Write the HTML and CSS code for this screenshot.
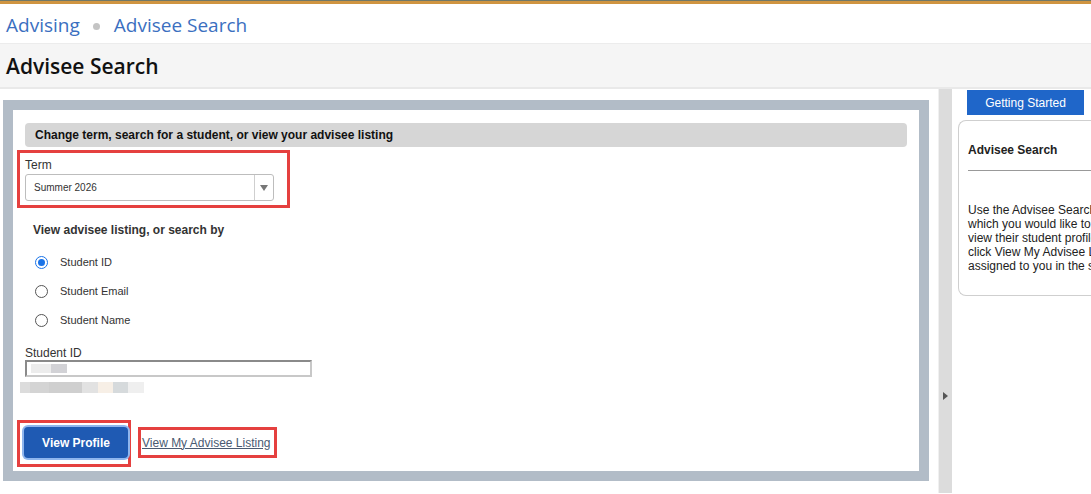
FILE: index.html
```html
<!DOCTYPE html>
<html>
<head>
<meta charset="utf-8">
<link rel="stylesheet" href="styles.css">
</head>
<body>
<div class="topline"></div>
<nav class="crumbs">
  <a class="crumb">Advising</a>
  <span class="dot"></span>
  <a class="crumb">Advisee Search</a>
</nav>
<header class="titlebar"><h1>Advisee Search</h1></header>
<div class="layout">
  <main class="maincol">
    <div class="frame">
      <div class="inner">
        <div class="sechead">Change term, search for a student, or view your advisee listing</div>
        <div class="redbox termbox">
          <div class="lbl">Term</div>
          <div class="select">
            <span class="selval">Summer 2026</span>
            <span class="selarrow"><svg width="8" height="6" viewBox="0 0 8 6"><path d="M0 0 H8 L4 6 Z" fill="#777"/></svg></span>
          </div>
        </div>
        <div class="subhead">View advisee listing, or search by</div>
        <div class="radios">
          <label class="radio"><span class="circle on"></span>Student ID</label>
          <label class="radio"><span class="circle"></span>Student Email</label>
          <label class="radio"><span class="circle"></span>Student Name</label>
        </div>
        <div class="lbl idlbl">Student ID</div>
        <div class="idinput"><span class="blur b1"></span><span class="blur b2"></span></div>
        <div class="blurrow">
          <span class="bb" style="width:10px;background:#dcdcdc"></span>
          <span class="bb" style="width:19px;background:#d4d4d4"></span>
          <span class="bb" style="width:33px;background:#cfcfcf"></span>
          <span class="bb" style="width:16px;background:#e2e2e2"></span>
          <span class="bb" style="width:15px;background:#f7efe6"></span>
          <span class="bb" style="width:15px;background:#d6dadc"></span>
          <span class="bb" style="width:16px;background:#efefef"></span>
        </div>
        <div class="actions">
          <div class="redbox btnbox"><button class="primary">View Profile</button></div>
          <div class="redbox linkbox"><a class="link">View My Advisee Listing</a></div>
        </div>
      </div>
    </div>
  </main>
  <div class="splitter"><svg width="5" height="8" viewBox="0 0 5 8"><path d="M0 0 L5 4 L0 8 Z" fill="#555"/></svg></div>
  <aside class="side">
    <div class="tab">Getting Started</div>
    <div class="card">
      <div class="cardtitle">Advisee Search</div>
      <hr class="cardrule">
      <p class="cardtext">Use the Advisee Search page to select a term<br>which you would like to work with. Search to<br>view their student profile, or alternatively<br>click View My Advisee Listing to see students<br>assigned to you in the selected term.</p>
    </div>
  </aside>
</div>
</body>
</html>
```
FILE: styles.css
```css
* { box-sizing: border-box; }
html, body { margin: 0; padding: 0; }
body {
  width: 1091px;
  height: 494px;
  overflow: hidden;
  background: #fff;
  font-family: "Liberation Sans", Arial, sans-serif;
  color: #222;
}
.topline {
  height: 4px;
  border-top: 1px solid #6f7868;
  background: #cf9440;
}
.crumbs {
  height: 40px;
  display: flex;
  align-items: center;
  padding: 3px 0 0 6px;
  font-family: "Open Sans", sans-serif;
  font-size: 19px;
  border-bottom: 1px solid #ececec;
}
.crumb { color: #3b6fc0; }
.dot {
  width: 7px; height: 7px;
  border-radius: 50%;
  background: #c4c4c4;
  margin: 2px 14px 0 13px;
}
.titlebar {
  height: 45px;
  background: #f5f5f5;
  border-bottom: 2px solid #e9e9e9;
  display: flex;
  align-items: center;
  padding-left: 6px;
}
.titlebar h1 {
  margin: 0;
  font-family: "Open Sans", sans-serif;
  font-weight: 600;
  font-size: 21px;
  color: #111;
}
.layout {
  display: flex;
  height: 404px;
}
.maincol {
  width: 939px;
  padding: 11px 0 0 3px;
  border-right: 1px solid #f0f0f0;
}
.frame {
  width: 926px;
  height: 381px;
  border: 10px solid #b2bcc7;
  background: #fff;
}
.inner {
  padding: 13px 0 0 4px;
  display: flex;
  flex-direction: column;
}
.sechead {
  margin-left: 8px;
  width: 882px;
  height: 24px;
  background: #d6d6d6;
  border-radius: 4px;
  font-weight: bold;
  font-size: 12px;
  line-height: 24px;
  padding-left: 10px;
  color: #111;
}
.redbox { border: 3px solid #e5403f; }
.termbox {
  margin-top: 3px;
  width: 273px;
  height: 58px;
  padding: 5px 0 0 5px;
}
.lbl { font-size: 12px; color: #333; line-height: 14px; }
.select {
  margin-top: 2px;
  width: 249px;
  height: 27px;
  border: 1px solid #bdbdbd;
  border-radius: 3px;
  display: flex;
  align-items: center;
}
.selval { flex: 1; font-size: 10px; color: #333; padding-left: 8px; }
.selarrow {
  width: 19px; height: 100%;
  border-left: 1px solid #cfcfcf;
  display: flex; align-items: center; justify-content: center;
}
.subhead {
  margin: 15px 0 0 16px;
  font-weight: bold;
  font-size: 12px;
  color: #333;
}
.radios {
  margin: 18px 0 0 18px;
  display: flex;
  flex-direction: column;
  gap: 15px;
}
.radio {
  display: flex;
  align-items: center;
  font-size: 11px;
  color: #333;
  height: 14px;
}
.circle {
  width: 13px; height: 13px;
  border: 1px solid #555;
  border-radius: 50%;
  margin-right: 12px;
  position: relative;
}
.circle.on { border-color: #1a73e8; }
.circle.on::after {
  content: "";
  position: absolute;
  left: 2px; top: 2px;
  width: 7px; height: 7px;
  border-radius: 50%;
  background: #1a73e8;
}
.idlbl { margin: 20px 0 0 8px; line-height: 12px; }
.idinput {
  margin: 1px 0 0 8px;
  width: 287px;
  height: 17px;
  border: 2px solid #8a8a8a;
  border-right-color: #c8c8c8;
  border-bottom-color: #c8c8c8;
  display: flex;
  align-items: center;
  padding-left: 4px;
}
.blur { display: inline-block; height: 9px; }
.b1 { width: 20px; background: #ececec; }
.b2 { width: 16px; background: #d2d2d6; }
.blurrow {
  margin: 5px 0 0 3px;
  display: flex;
  height: 11px;
}
.bb { display: inline-block; height: 11px; }
.actions {
  margin: 27px 0 0 0;
  display: flex;
  align-items: flex-start;
  gap: 7px;
}
.btnbox {
  width: 114px; height: 47px;
  padding: 4px 0 0 4px;
}
.primary {
  width: 104px; height: 31px;
  background: #1f5ab3;
  color: #fff;
  font-family: "Liberation Sans", Arial, sans-serif;
  font-weight: bold;
  font-size: 12px;
  border: none;
  border-radius: 4px;
  box-shadow: 0 0 0 2px #8fb6ee;
}
.linkbox {
  margin-top: 7px;
  width: 139px; height: 31px;
  padding-left: 1px;
  display: flex; align-items: center;
}
.link {
  font-size: 12px;
  color: #4a5a72;
  text-decoration: underline;
}
.splitter {
  width: 13px;
  background: #dcdcdc;
  display: flex;
  align-items: flex-start;
  justify-content: center;
  padding-top: 303px;
}
.side {
  flex: 1;
  overflow: hidden;
  display: flex;
  flex-direction: column;
}
.tab {
  margin: 1px 0 0 15px;
  width: 117px;
  height: 25px;
  background: #1f66c9;
  color: #fff;
  font-size: 12px;
  display: flex; align-items: center; justify-content: center;
}
.card {
  margin: 5px 0 0 6px;
  width: 150px;
  height: 176px;
  border: 1px solid #cfcfcf;
  border-right: none;
  border-radius: 8px 0 0 8px;
  padding: 0 0 0 9px;
  overflow: hidden;
}
.cardtitle {
  margin-top: 22px;
  font-size: 12px;
  font-weight: bold;
  color: #222;
}
.cardrule {
  margin: 13px 0 0 0;
  border: none;
  border-top: 1px solid #999;
  width: 200px;
}
.cardtext {
  margin: 32px 0 0 0;
  font-size: 12px;
  line-height: 14px;
  color: #222;
  white-space: nowrap;
}
```
